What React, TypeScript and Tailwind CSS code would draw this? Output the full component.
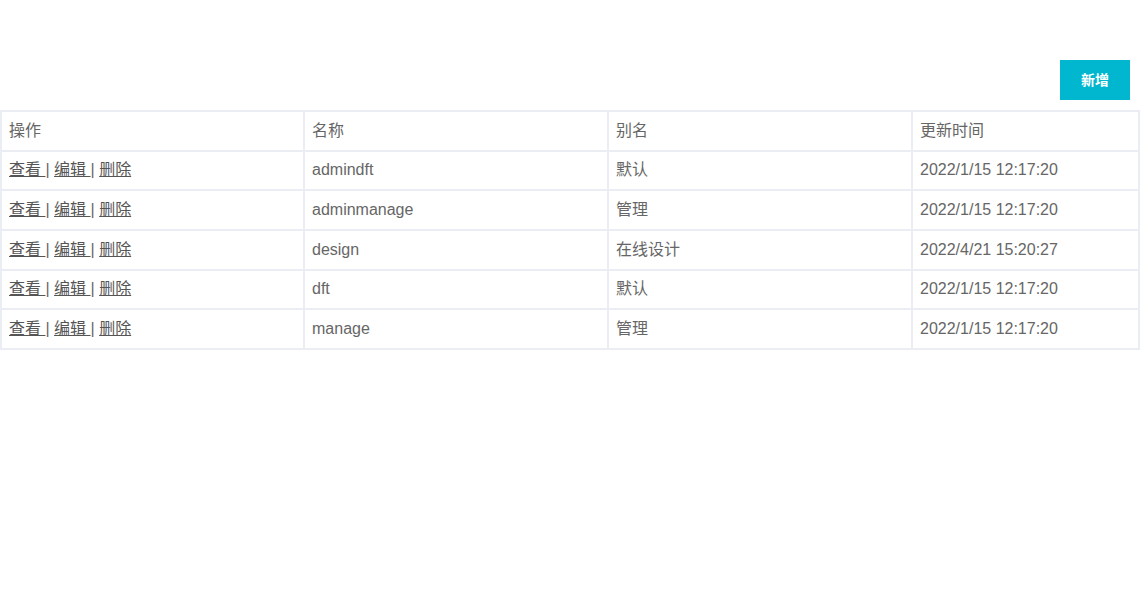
import React from "react";

type Row = { name: string; alias: string; time: string };

const rows: Row[] = [
  { name: "admindft", alias: "默认", time: "2022/1/15 12:17:20" },
  { name: "adminmanage", alias: "管理", time: "2022/1/15 12:17:20" },
  { name: "design", alias: "在线设计", time: "2022/4/21 15:20:27" },
  { name: "dft", alias: "默认", time: "2022/1/15 12:17:20" },
  { name: "manage", alias: "管理", time: "2022/1/15 12:17:20" },
];

const cell =
  "border border-[#ebedf5] h-[39.67px] px-[7px] py-0 text-left align-middle font-normal";

const App = () => {
  return (
    <div
      className="w-[1140px] min-h-[607px] bg-white text-[16px] text-[#666]"
      style={{ fontFamily: '"Liberation Sans", Arial, "Noto Sans CJK SC", sans-serif' }}
    >
      <div className="flex justify-end pt-[60px] pr-[10px] pb-[10px]">
        <button className="w-[70px] h-[40px] bg-[#00b7cf] text-white text-[14px] font-bold">
          新增
        </button>
      </div>
      <table className="w-[1140px] border border-[#ebedf5] border-separate border-spacing-0 table-fixed">
        <colgroup>
          <col className="w-[303px]" />
          <col className="w-[304px]" />
          <col className="w-[304px]" />
          <col />
        </colgroup>
        <thead>
          <tr>
            <th className={cell}>操作</th>
            <th className={cell}>名称</th>
            <th className={cell}>别名</th>
            <th className={cell}>更新时间</th>
          </tr>
        </thead>
        <tbody>
          {rows.map((r) => (
            <tr key={r.name}>
              <td className={cell}>
                <a className="underline text-[#555] cursor-pointer">查看 </a>|{" "}
                <a className="underline text-[#555] cursor-pointer">编辑 </a>|{" "}
                <a className="underline text-[#555] cursor-pointer">删除</a>
              </td>
              <td className={cell}>{r.name}</td>
              <td className={cell}>{r.alias}</td>
              <td className={cell}>{r.time}</td>
            </tr>
          ))}
        </tbody>
      </table>
    </div>
  );
};

export default App;
